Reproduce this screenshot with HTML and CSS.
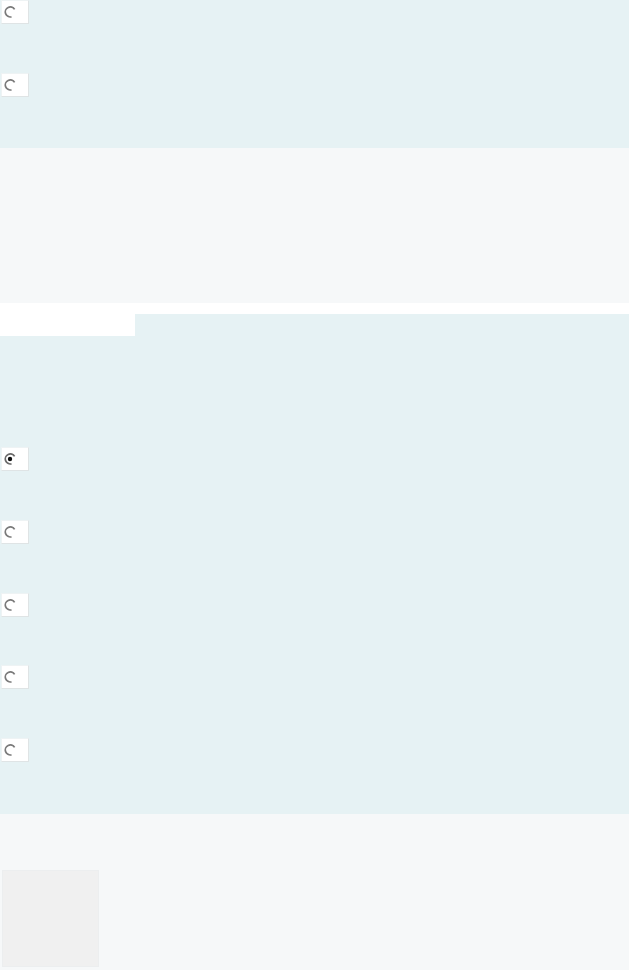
FILE: index.html
```html
<!DOCTYPE html>
<html lang="en">
<head>
    <meta charset="UTF-8">
    <meta name="viewport" content="width=device-width, initial-scale=1.0">
    <title>Options</title>
    <link rel="stylesheet" href="styles.css">
</head>
<body>
    <div class="panel panel-top">
        <div class="options">
            <span class="radio"><svg width="14" height="14" viewBox="0 0 14 14"><path d="M11.6 4.4 A5 5 0 1 0 8.5 11.8" fill="none" stroke="#7a7a7a" stroke-width="1.7"/></svg></span>
            <span class="radio"><svg width="14" height="14" viewBox="0 0 14 14"><path d="M11.6 4.4 A5 5 0 1 0 8.5 11.8" fill="none" stroke="#7a7a7a" stroke-width="1.7"/></svg></span>
        </div>
    </div>
    <div class="gap-block"></div>
    <div class="spacer"></div>
    <div class="panel panel-main">
        <div class="tab"></div>
        <div class="options options-main">
            <span class="radio"><svg width="14" height="14" viewBox="0 0 14 14"><path d="M11.6 4.4 A5 5 0 1 0 8.5 11.8" fill="none" stroke="#6a6a6a" stroke-width="1.7"/><circle cx="7" cy="7" r="2.2" fill="#111"/></svg></span>
            <span class="radio"><svg width="14" height="14" viewBox="0 0 14 14"><path d="M11.6 4.4 A5 5 0 1 0 8.5 11.8" fill="none" stroke="#7a7a7a" stroke-width="1.7"/></svg></span>
            <span class="radio"><svg width="14" height="14" viewBox="0 0 14 14"><path d="M11.6 4.4 A5 5 0 1 0 8.5 11.8" fill="none" stroke="#7a7a7a" stroke-width="1.7"/></svg></span>
            <span class="radio"><svg width="14" height="14" viewBox="0 0 14 14"><path d="M11.6 4.4 A5 5 0 1 0 8.5 11.8" fill="none" stroke="#7a7a7a" stroke-width="1.7"/></svg></span>
            <span class="radio"><svg width="14" height="14" viewBox="0 0 14 14"><path d="M11.6 4.4 A5 5 0 1 0 8.5 11.8" fill="none" stroke="#7a7a7a" stroke-width="1.7"/></svg></span>
        </div>
    </div>
    <div class="panel-bottom">
        <div class="thumb"></div>
    </div>
</body>
</html>
```

FILE: styles.css
```css
body {
    margin: 0;
    padding: 0;
    background: #ffffff;
    font-family: "Liberation Sans", Arial, sans-serif;
}
.panel {
    background: #e6f2f4;
}
.panel-top {
    height: 148px;
}
.options {
    display: flex;
    flex-direction: column;
    align-items: flex-start;
    gap: 48.5px;
    padding-left: 1px;
}
.options-main {
    gap: 48.75px;
    padding-top: 111px;
    padding-bottom: 52px;
}
.radio {
    display: flex;
    align-items: center;
    box-sizing: border-box;
    width: 28px;
    height: 24px;
    padding-left: 1px;
    background: #ffffff;
    border: 1px solid #eef3f4;
    border-right-color: #dfe4e5;
    border-bottom-color: #dfe4e5;
}
.gap-block {
    height: 155px;
    background: #f6f8f9;
}
.spacer {
    height: 11px;
    background: #ffffff;
}
.tab {
    width: 135px;
    height: 22px;
    background: #ffffff;
}
.panel-bottom {
    height: 156px;
    background: #f6f8f9;
    padding: 56px 0 0 2px;
    box-sizing: border-box;
}
.thumb {
    width: 97px;
    height: 97px;
    box-sizing: border-box;
    background: #f0f0f0;
    border: 1px solid #eceeef;
}
```
